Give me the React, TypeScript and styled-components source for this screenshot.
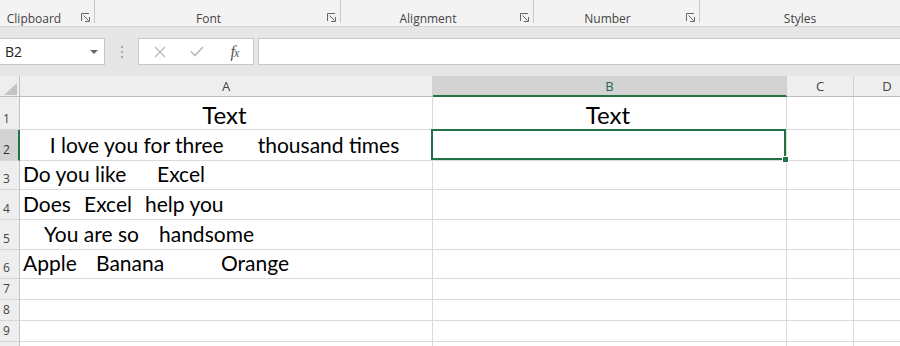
import React from 'react';
import styled, { createGlobalStyle } from 'styled-components';

const Global = createGlobalStyle`
  html, body { margin: 0; padding: 0; background: #ffffff; }
  body { width: 900px; height: 346px; overflow: hidden; font-family: "Open Sans", "Noto Sans", sans-serif; }
  * { box-sizing: border-box; }
`;

const GREEN = '#217346';

const Page = styled.div`
  width: 900px;
  height: 346px;
  overflow: hidden;
  display: flex;
  flex-direction: column;
  background: #e6e6e6;
`;

const Ribbon = styled.div`
  height: 27px;
  flex-shrink: 0;
  display: flex;
  align-items: flex-start;
  background: #f3f3f3;
  border-bottom: 1px solid #d4d4d4;
`;

const Group = styled.div<{ $w?: number }>`
  display: flex;
  align-items: flex-end;
  height: 23px;
  ${(p) => (p.$w ? `width: ${p.$w}px; flex-shrink: 0; border-right: 1px solid #c8c8c8;` : 'flex: 1;')}
`;

const GroupLabel = styled.div<{ $shift?: number }>`
  flex: 1;
  text-align: center;
  font-size: 12px;
  line-height: 14px;
  color: #444444;
  margin-bottom: -3px;
  padding-right: ${(p) => p.$shift ?? 0}px;
`;

const Launcher = styled.div`
  width: 18px;
  height: 100%;
  display: flex;
  align-items: flex-end;
  justify-content: flex-end;
  padding: 0 4px 1px 0;
  color: #666666;
`;

const FormulaArea = styled.div`
  height: 49px;
  flex-shrink: 0;
  display: flex;
  align-items: center;
  padding: 11px 0;
`;

const NameBox = styled.div`
  width: 105px;
  height: 27px;
  background: #ffffff;
  border: 1px solid #c6c6c6;
  border-left: none;
  display: flex;
  align-items: center;
  justify-content: space-between;
  padding: 0 6px 0 5px;
  font-size: 14px;
  color: #222222;
`;

const DropArrow = styled.span`
  width: 0;
  height: 0;
  border-left: 4px solid transparent;
  border-right: 4px solid transparent;
  border-top: 4px solid #666666;
`;

const Grip = styled.div`
  width: 33px;
  height: 27px;
  display: flex;
  flex-direction: column;
  align-items: center;
  justify-content: center;
  gap: 3px;
`;

const GripDot = styled.span`
  width: 2px;
  height: 2px;
  background: #a8a8a8;
`;

const FxBox = styled.div`
  width: 116px;
  height: 27px;
  background: #ffffff;
  border: 1px solid #c6c6c6;
  display: flex;
  align-items: center;
  padding-left: 2px;
`;

const FxSlot = styled.div`
  width: 38px;
  display: flex;
  align-items: center;
  justify-content: center;
`;

const FxText = styled.span`
  font-family: "Liberation Serif", "DejaVu Serif", serif;
  font-style: italic;
  font-size: 16px;
  color: #555555;
  letter-spacing: -1px;
`;

const FxSub = styled.span`
  font-size: 12px;
`;

const Input = styled.div`
  flex: 1;
  height: 27px;
  margin-left: 4px;
  background: #ffffff;
  border: 1px solid #c6c6c6;
  border-right: none;
`;

const Sheet = styled.div`
  flex: 1;
  display: grid;
  grid-template-columns: 20px 413px 354px 67px 67px;
  grid-template-rows: 21px 33px 31px 29px 30px 30px 29px 21px 21px 21px 21px;
  background: #ffffff;
  overflow: hidden;
`;

const Corner = styled.div`
  background: #eeeeee;
  border-right: 1px solid #c2c2c2;
  border-bottom: 1px solid #bdbdbd;
  display: flex;
  align-items: flex-end;
  justify-content: flex-end;
  padding: 0 2px 1px 0;
`;

const ColHead = styled.div<{ $sel?: boolean }>`
  background: ${(p) => (p.$sel ? '#d3d3d3' : '#eeeeee')};
  border-right: 1px solid #d0d0d0;
  border-bottom: ${(p) => (p.$sel ? `2px solid ${GREEN}` : '1px solid #bdbdbd')};
  display: flex;
  align-items: center;
  justify-content: center;
  font-size: 13px;
  color: ${(p) => (p.$sel ? '#1f6a55' : '#444444')};
  padding-top: ${(p) => (p.$sel ? 1 : 0)}px;
`;

const RowHead = styled.div<{ $sel?: boolean }>`
  background: ${(p) => (p.$sel ? '#d3d3d3' : '#eeeeee')};
  border-right: ${(p) => (p.$sel ? `2px solid ${GREEN}` : '1px solid #c2c2c2')};
  border-bottom: 1px solid #d6d6d6;
  display: flex;
  align-items: flex-end;
  padding: 0 0 2px 3px;
  font-size: 12px;
  line-height: 16px;
  color: ${(p) => (p.$sel ? '#333333' : '#444444')};
`;

const Cell = styled.div<{ $center?: boolean; $big?: boolean; $pad?: number }>`
  position: relative;
  border-right: 1px solid #dadada;
  border-bottom: 1px solid #dadada;
  display: flex;
  align-items: flex-end;
  justify-content: ${(p) => (p.$center ? 'center' : 'flex-start')};
  padding-bottom: ${(p) => (p.$big ? 2 : 5)}px;
  padding-left: ${(p) => (p.$center ? 0 : p.$pad ?? 3)}px;
  padding-right: ${(p) => (p.$center ? 3 : 0)}px;
  font-family: Lato, "Noto Sans", sans-serif;
  font-size: ${(p) => (p.$big ? 24 : 21)}px;
  line-height: ${(p) => (p.$big ? 24 : 21)}px;
  color: #000000;
  white-space: pre;
  overflow: visible;
  z-index: ${(p) => (p.$center ? 1 : 0)};
`;

const Chunk = styled.span<{ $w?: number }>`
  display: inline-block;
  white-space: pre;
  ${(p) => (p.$w ? `width: ${p.$w}px;` : '')}
`;

const ActiveCell = styled.div`
  position: relative;
  border-right: 1px solid #dadada;
  border-bottom: 1px solid #dadada;
  z-index: 2;
`;

const SelectionFrame = styled.div`
  position: absolute;
  left: -2px;
  top: -1px;
  right: 0;
  bottom: 0;
  border: 2px solid ${GREEN};
`;

const FillHandle = styled.div`
  position: absolute;
  right: -3px;
  bottom: -3px;
  width: 7px;
  height: 7px;
  background: ${GREEN};
  border: 1px solid #ffffff;
`;

const LauncherIcon = () => (
  <svg width="9" height="9" viewBox="0 0 9 9" fill="none" stroke="currentColor" strokeWidth="1">
    <path d="M0.5 8 V0.5 H8" />
    <path d="M2.5 2.5 L7.5 7.5" />
    <path d="M4 8.5 H8.5 V4" />
  </svg>
);

const CornerTriangle = () => (
  <svg width="13" height="12" viewBox="0 0 13 12">
    <polygon points="13,0 13,12 0,12" fill="#c4c4c4" />
  </svg>
);

const CrossIcon = () => (
  <svg width="12" height="12" viewBox="0 0 12 12" stroke="#b9b9b9" strokeWidth="1.3" fill="none">
    <path d="M1 1 L11 11 M11 1 L1 11" />
  </svg>
);

const CheckIcon = () => (
  <svg width="14" height="11" viewBox="0 0 14 11" stroke="#b9b9b9" strokeWidth="1.6" fill="none">
    <path d="M1 5.5 L5 9.5 L13 1" />
  </svg>
);

type Part = { t: string; w?: number };
type RowData = { a: Part[]; aCenter?: boolean; aPad?: number; b?: string; big?: boolean; label?: boolean };

const rows: RowData[] = [
  { a: [{ t: 'Text' }], aCenter: true, b: 'Text', big: true },
  { a: [{ t: 'I love you for three', w: 208 }, { t: 'thousand times' }], aCenter: true },
  { a: [{ t: 'Do you like', w: 134 }, { t: 'Excel' }] },
  { a: [{ t: 'Does', w: 61 }, { t: 'Excel', w: 61 }, { t: 'help you' }] },
  { a: [{ t: 'You are so', w: 115 }, { t: 'handsome' }], aPad: 24 },
  { a: [{ t: 'Apple', w: 73 }, { t: 'Banana', w: 125 }, { t: 'Orange' }] },
  { a: [] },
  { a: [] },
  { a: [] },
  { a: [], label: false },
];

export default function App() {
  return (
    <>
      <Global />
      <Page>
        <Ribbon>
          <Group $w={95}>
            <GroupLabel $shift={8}>Clipboard</GroupLabel>
            <Launcher><LauncherIcon /></Launcher>
          </Group>
          <Group $w={246}>
            <GroupLabel>Font</GroupLabel>
            <Launcher><LauncherIcon /></Launcher>
          </Group>
          <Group $w={193}>
            <GroupLabel>Alignment</GroupLabel>
            <Launcher><LauncherIcon /></Launcher>
          </Group>
          <Group $w={166}>
            <GroupLabel>Number</GroupLabel>
            <Launcher><LauncherIcon /></Launcher>
          </Group>
          <Group>
            <GroupLabel>Styles</GroupLabel>
          </Group>
        </Ribbon>

        <FormulaArea>
          <NameBox>
            <span>B2</span>
            <DropArrow />
          </NameBox>
          <Grip>
            <GripDot />
            <GripDot />
            <GripDot />
          </Grip>
          <FxBox>
            <FxSlot><CrossIcon /></FxSlot>
            <FxSlot><CheckIcon /></FxSlot>
            <FxSlot>
              <FxText>f<FxSub>x</FxSub></FxText>
            </FxSlot>
          </FxBox>
          <Input />
        </FormulaArea>

        <Sheet>
          <Corner><CornerTriangle /></Corner>
          <ColHead>A</ColHead>
          <ColHead $sel>B</ColHead>
          <ColHead>C</ColHead>
          <ColHead>D</ColHead>

          {rows.map((r, i) => {
            const n = i + 1;
            const active = n === 2;
            return (
              <React.Fragment key={n}>
                <RowHead $sel={active}>{r.label === false ? '' : n}</RowHead>
                <Cell $center={r.aCenter} $big={r.big} $pad={r.aPad}>
                  {r.a.map((p, k) => (
                    <Chunk key={k} $w={p.w}>{p.t}</Chunk>
                  ))}
                </Cell>
                {active ? (
                  <ActiveCell>
                    <SelectionFrame />
                    <FillHandle />
                  </ActiveCell>
                ) : (
                  <Cell $center $big={r.big}>{r.b ?? ''}</Cell>
                )}
                <Cell />
                <Cell />
              </React.Fragment>
            );
          })}
        </Sheet>
      </Page>
    </>
  );
}
